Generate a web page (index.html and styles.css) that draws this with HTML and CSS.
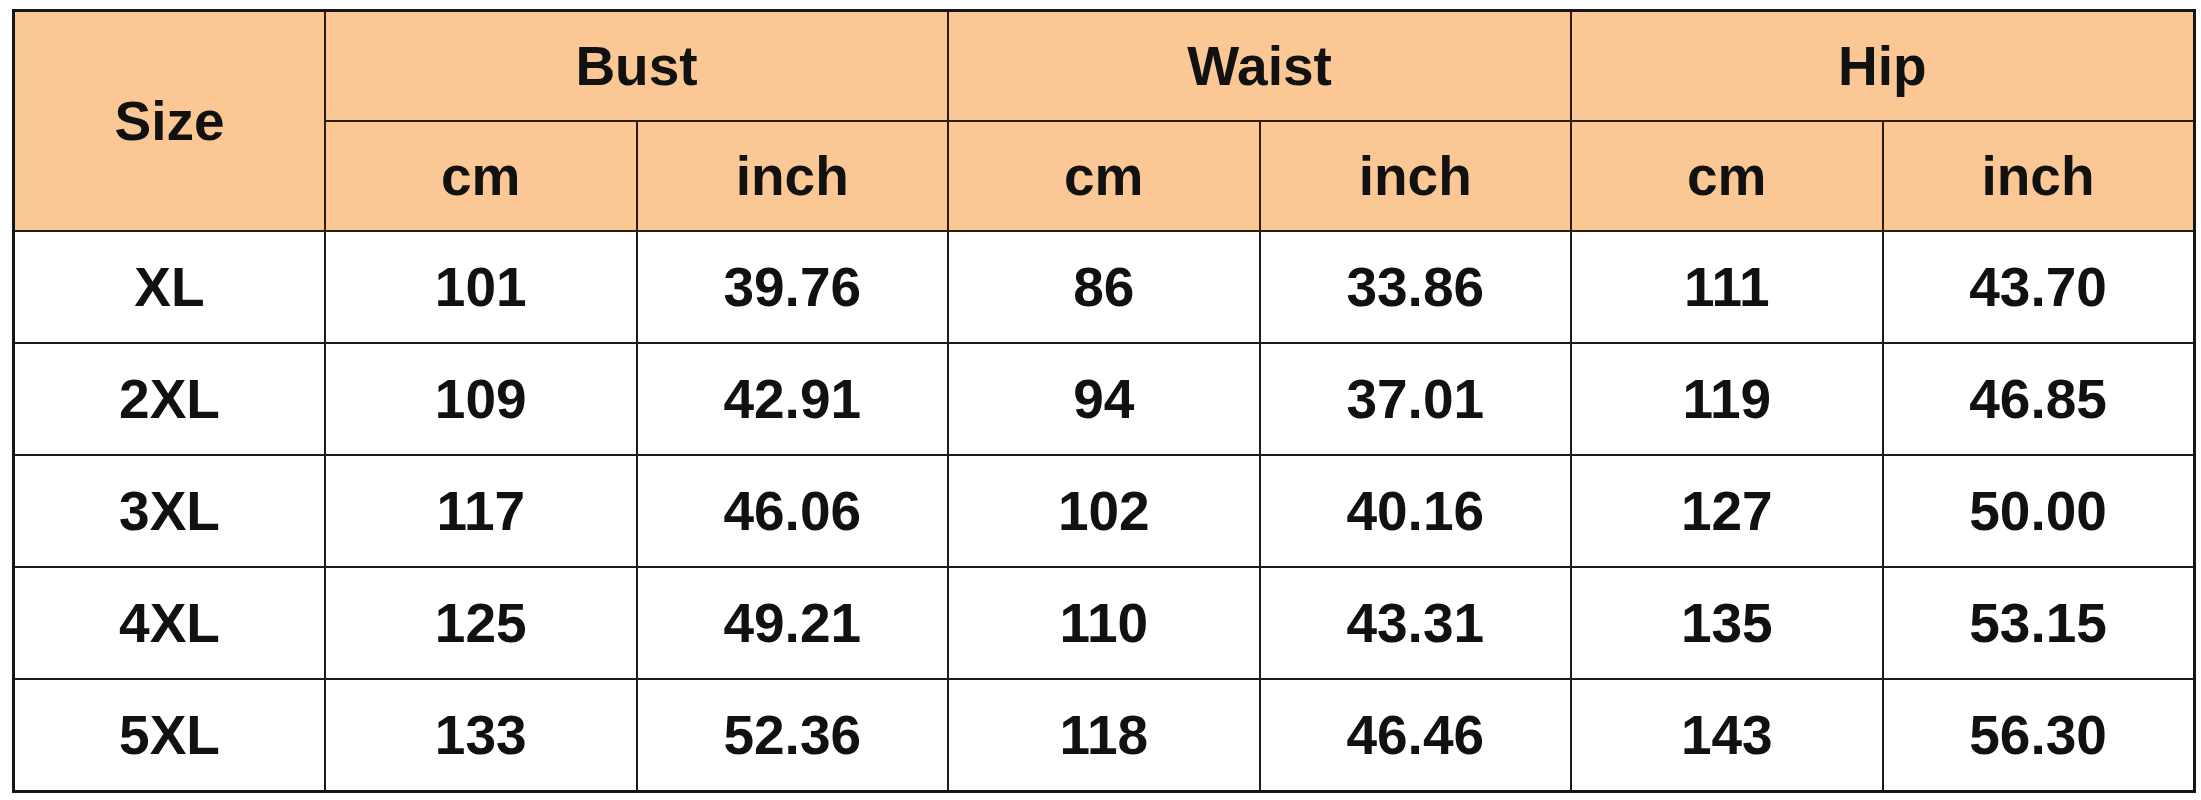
FILE: index.html
```html
<!DOCTYPE html>
<html lang="en">
<head>
    <meta charset="UTF-8">
    <title>Size Chart</title>
    <link rel="stylesheet" href="styles.css">
</head>
<body>
<table class="size-chart">
    <colgroup>
        <col><col><col><col><col><col><col>
    </colgroup>
    <thead>
        <tr>
            <th rowspan="2">Size</th>
            <th colspan="2">Bust</th>
            <th colspan="2">Waist</th>
            <th colspan="2">Hip</th>
        </tr>
        <tr>
            <th>cm</th><th>inch</th>
            <th>cm</th><th>inch</th>
            <th>cm</th><th>inch</th>
        </tr>
    </thead>
    <tbody>
        <tr><td>XL</td><td>101</td><td>39.76</td><td>86</td><td>33.86</td><td>111</td><td>43.70</td></tr>
        <tr><td>2XL</td><td>109</td><td>42.91</td><td>94</td><td>37.01</td><td>119</td><td>46.85</td></tr>
        <tr><td>3XL</td><td>117</td><td>46.06</td><td>102</td><td>40.16</td><td>127</td><td>50.00</td></tr>
        <tr><td>4XL</td><td>125</td><td>49.21</td><td>110</td><td>43.31</td><td>135</td><td>53.15</td></tr>
        <tr><td>5XL</td><td>133</td><td>52.36</td><td>118</td><td>46.46</td><td>143</td><td>56.30</td></tr>
    </tbody>
</table>
</body>
</html>
```

FILE: styles.css
```css
body { margin: 0; padding: 9px 0 0 12px; background: #fff; font-family: "Liberation Sans", Arial, sans-serif; }
.size-chart {
    border-collapse: collapse; table-layout: fixed; width: 2181px;
    border: 3px solid #161616;
}
.size-chart col { width: 311.5px; }
.size-chart th, .size-chart td {
    border: 2px solid #1c1c1c; height: 110px; padding: 0;
    text-align: center; vertical-align: middle;
    font-size: 55px; font-weight: bold; color: #111;
}
.size-chart th { height: 108px; background-color: #fbc895; border-color: #2a1e12; }
```
